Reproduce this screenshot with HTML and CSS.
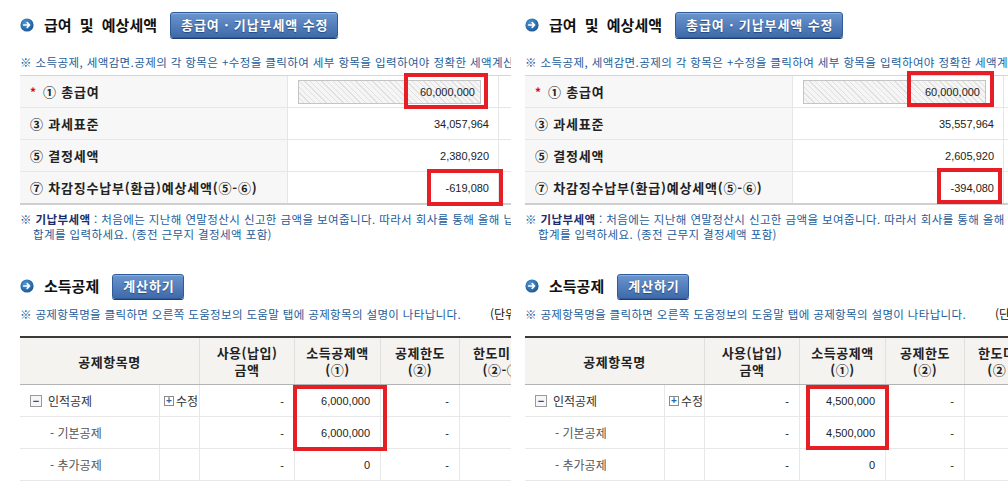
FILE: index.html
```html
<!DOCTYPE html>
<html lang="ko">
<head>
<meta charset="utf-8">
<title>급여 및 예상세액</title>
<link rel="stylesheet" href="styles.css">
</head>
<body>
<div class="page">

  <section class="panel panel-a">
    <div class="sheet">
      <div class="sec-head">
        <svg class="sec-icon" width="14" height="14" viewBox="0 0 14 14"><defs><radialGradient id="ga" cx="0.4" cy="0.35" r="0.7"><stop offset="0" stop-color="#4f97d6"/><stop offset="1" stop-color="#1a5592"/></radialGradient></defs><circle cx="7" cy="7" r="6.6" fill="url(#ga)"/><path d="M3.6 7h6 M7.2 4.6l2.4 2.4-2.4 2.4" stroke="#fff" stroke-width="1.6" fill="none" stroke-linecap="round" stroke-linejoin="round"/></svg>
        <h2 class="sec-title">급여 및 예상세액</h2>
        <button class="btn">총급여 · 기납부세액 수정</button>
      </div>
      <p class="notice">※ 소득공제, 세액감면.공제의 각 항목은 +수정을 클릭하여 세부 항목을 입력하여야 정확한 세액계산</p>
      <div class="sum-table">
        <div class="srow">
          <div class="slabel"><span class="req">*</span>① 총급여</div>
          <div class="sval"><div class="hatch">60,000,000</div></div>
          <div class="sext"></div>
        </div>
        <div class="srow">
          <div class="slabel">③ 과세표준</div>
          <div class="sval">34,057,964</div>
          <div class="sext"></div>
        </div>
        <div class="srow">
          <div class="slabel">⑤ 결정세액</div>
          <div class="sval">2,380,920</div>
          <div class="sext"></div>
        </div>
        <div class="srow last">
          <div class="slabel">⑦ 차감징수납부(환급)예상세액(⑤-⑥)</div>
          <div class="sval">-619,080</div>
          <div class="sext"></div>
        </div>
      </div>
      <div class="foot">
        <p class="foot-line">※ <b>기납부세액</b> : 처음에는 지난해 연말정산시 신고한 금액을 보여줍니다. 따라서 회사를 통해 올해 납</p>
        <p class="foot-line indent">합계를 입력하세요. (종전 근무지 결정세액 포함)</p>
      </div>

      <div class="sec-head sec2">
        <svg class="sec-icon" width="14" height="14" viewBox="0 0 14 14"><defs><radialGradient id="gb" cx="0.4" cy="0.35" r="0.7"><stop offset="0" stop-color="#4f97d6"/><stop offset="1" stop-color="#1a5592"/></radialGradient></defs><circle cx="7" cy="7" r="6.6" fill="url(#gb)"/><path d="M3.6 7h6 M7.2 4.6l2.4 2.4-2.4 2.4" stroke="#fff" stroke-width="1.6" fill="none" stroke-linecap="round" stroke-linejoin="round"/></svg>
        <h2 class="sec-title">소득공제</h2>
        <button class="btn btn-sm">계산하기</button>
      </div>
      <div class="notice2">
        <span class="notice2-text">※ 공제항목명을 클릭하면 오른쪽 도움정보의 도움말 탭에 공제항목의 설명이 나타납니다.</span>
        <span class="unit">(단위</span>
      </div>
      <div class="ded-table">
        <div class="dhead">
          <div class="dh dh-name">공제항목명</div>
          <div class="dh">사용(납입)<br>금액</div>
          <div class="dh">소득공제액<br>(①)</div>
          <div class="dh">공제한도<br>(②)</div>
          <div class="dh dh-cut">한도미달액<br>(②-①)</div>
        </div>
        <div class="drow">
          <div class="dc dname"><span class="tog">&minus;</span>인적공제</div>
          <div class="dc dedit"><span class="plus">+</span>수정</div>
          <div class="dc num">-</div>
          <div class="dc num">6,000,000</div>
          <div class="dc num">-</div>
          <div class="dc"></div>
        </div>
        <div class="drow">
          <div class="dc dname sub">- 기본공제</div>
          <div class="dc dedit"></div>
          <div class="dc num">-</div>
          <div class="dc num">6,000,000</div>
          <div class="dc num">-</div>
          <div class="dc"></div>
        </div>
        <div class="drow">
          <div class="dc dname sub">- 추가공제</div>
          <div class="dc dedit"></div>
          <div class="dc num">-</div>
          <div class="dc num">0</div>
          <div class="dc num">-</div>
          <div class="dc"></div>
        </div>
      </div>

      <div class="hl hl-1"></div>
      <div class="hl hl-2"></div>
      <div class="hl hl-3"></div>
    </div>
  </section>

  <section class="panel panel-b">
    <div class="sheet">
      <div class="sec-head">
        <svg class="sec-icon" width="14" height="14" viewBox="0 0 14 14"><defs><radialGradient id="gc" cx="0.4" cy="0.35" r="0.7"><stop offset="0" stop-color="#4f97d6"/><stop offset="1" stop-color="#1a5592"/></radialGradient></defs><circle cx="7" cy="7" r="6.6" fill="url(#gc)"/><path d="M3.6 7h6 M7.2 4.6l2.4 2.4-2.4 2.4" stroke="#fff" stroke-width="1.6" fill="none" stroke-linecap="round" stroke-linejoin="round"/></svg>
        <h2 class="sec-title">급여 및 예상세액</h2>
        <button class="btn">총급여 · 기납부세액 수정</button>
      </div>
      <p class="notice">※ 소득공제, 세액감면.공제의 각 항목은 +수정을 클릭하여 세부 항목을 입력하여야 정확한 세액계산</p>
      <div class="sum-table">
        <div class="srow">
          <div class="slabel"><span class="req">*</span>① 총급여</div>
          <div class="sval"><div class="hatch">60,000,000</div></div>
          <div class="sext"></div>
        </div>
        <div class="srow">
          <div class="slabel">③ 과세표준</div>
          <div class="sval">35,557,964</div>
          <div class="sext"></div>
        </div>
        <div class="srow">
          <div class="slabel">⑤ 결정세액</div>
          <div class="sval">2,605,920</div>
          <div class="sext"></div>
        </div>
        <div class="srow last">
          <div class="slabel">⑦ 차감징수납부(환급)예상세액(⑤-⑥)</div>
          <div class="sval">-394,080</div>
          <div class="sext"></div>
        </div>
      </div>
      <div class="foot">
        <p class="foot-line">※ <b>기납부세액</b> : 처음에는 지난해 연말정산시 신고한 금액을 보여줍니다. 따라서 회사를 통해 올해</p>
        <p class="foot-line indent">합계를 입력하세요. (종전 근무지 결정세액 포함)</p>
      </div>

      <div class="sec-head sec2">
        <svg class="sec-icon" width="14" height="14" viewBox="0 0 14 14"><defs><radialGradient id="gd" cx="0.4" cy="0.35" r="0.7"><stop offset="0" stop-color="#4f97d6"/><stop offset="1" stop-color="#1a5592"/></radialGradient></defs><circle cx="7" cy="7" r="6.6" fill="url(#gd)"/><path d="M3.6 7h6 M7.2 4.6l2.4 2.4-2.4 2.4" stroke="#fff" stroke-width="1.6" fill="none" stroke-linecap="round" stroke-linejoin="round"/></svg>
        <h2 class="sec-title">소득공제</h2>
        <button class="btn btn-sm">계산하기</button>
      </div>
      <div class="notice2">
        <span class="notice2-text">※ 공제항목명을 클릭하면 오른쪽 도움정보의 도움말 탭에 공제항목의 설명이 나타납니다.</span>
        <span class="unit">(단</span>
      </div>
      <div class="ded-table">
        <div class="dhead">
          <div class="dh dh-name">공제항목명</div>
          <div class="dh">사용(납입)<br>금액</div>
          <div class="dh">소득공제액<br>(①)</div>
          <div class="dh">공제한도<br>(②)</div>
          <div class="dh dh-cut">한도미<br>(②</div>
        </div>
        <div class="drow">
          <div class="dc dname"><span class="tog">&minus;</span>인적공제</div>
          <div class="dc dedit"><span class="plus">+</span>수정</div>
          <div class="dc num">-</div>
          <div class="dc num">4,500,000</div>
          <div class="dc num">-</div>
          <div class="dc"></div>
        </div>
        <div class="drow">
          <div class="dc dname sub">- 기본공제</div>
          <div class="dc dedit"></div>
          <div class="dc num">-</div>
          <div class="dc num">4,500,000</div>
          <div class="dc num">-</div>
          <div class="dc"></div>
        </div>
        <div class="drow">
          <div class="dc dname sub">- 추가공제</div>
          <div class="dc dedit"></div>
          <div class="dc num">-</div>
          <div class="dc num">0</div>
          <div class="dc num">-</div>
          <div class="dc"></div>
        </div>
      </div>

      <div class="hl hl-1"></div>
      <div class="hl hl-2"></div>
      <div class="hl hl-3"></div>
    </div>
  </section>

</div>
</body>
</html>
```

FILE: styles.css
```css
* { box-sizing: border-box; }
html, body { margin: 0; padding: 0; background: #fff; }
body {
  font-family: "Liberation Sans", "Noto Sans CJK KR", sans-serif;
  color: #333;
  width: 1008px;
  height: 484px;
  overflow: hidden;
}
.page { display: flex; width: 1008px; height: 484px; }
.panel { overflow: hidden; height: 484px; }
.panel-a { width: 511px; padding-left: 20px; }
.panel-b { width: 497px; padding-left: 14px; }
.sheet { position: relative; padding-top: 12px; overflow: hidden; height: 484px; }
.panel-a .sheet { width: 491px; }
.panel-b .sheet { width: 483px; }

/* section header */
.sec-head {
  display: flex;
  align-items: center;
  height: 26px;
}
.sec-icon { flex: 0 0 14px; display: block; }
.sec-title {
  margin: 0 0 0 10px;
  font-family: "Noto Sans CJK KR", sans-serif;
  font-size: 15px;
  font-weight: 700;
  color: #111;
  word-spacing: 4px;
  line-height: 26px;
  white-space: nowrap;
}
.btn {
  margin-left: 13px;
  height: 26px;
  padding: 0 9px 0 10px;
  border: 1px solid #2f5b98;
  border-radius: 3px;
  background: linear-gradient(#6b95cd, #3f6aab);
  box-shadow: inset 0 1px 0 rgba(255,255,255,0.25), 0 1px 0 #1f3f6e;
  color: #fff;
  font-family: "Noto Sans CJK KR", sans-serif;
  font-size: 13px;
  font-weight: 700;
  letter-spacing: 0.9px;
  line-height: 22px;
  text-shadow: 0 1px 1px #27497c;
  white-space: nowrap;
}
.btn-sm { padding: 0 8px 0 10px; height: 25px; margin-left: 13px; }

/* notices */
.notice {
  margin: 16px 0 0;
  font-family: "Noto Sans CJK KR", sans-serif;
  font-size: 11.5px;
  letter-spacing: 0.4px;
  line-height: 16px;
  color: #1d5c9b;
  white-space: nowrap;
  overflow: hidden;
}

/* summary table */
.sum-table { margin-top: 5px; border-top: 1px solid #d6d6d6; }
.srow {
  display: grid;
  grid-template-columns: 268px 211px 140px;
  height: 32px;
  border-bottom: 1px solid #e6e6e6;
}
.srow.last { height: 33px; border-bottom: 2px solid #cfcfcf; }
.slabel {
  background: #f7f7f7;
  border-right: 1px solid #e6e6e6;
  padding-left: 10px;
  font-family: "Noto Sans CJK KR", sans-serif;
  font-size: 13px;
  font-weight: 700;
  letter-spacing: 0.8px;
  color: #222;
  display: flex;
  align-items: center;
  white-space: nowrap;
}
.req { color: #d01010; margin-right: 6px; font-size: 12px; }
.sval {
  border-right: 1px solid #e6e6e6;
  display: flex;
  align-items: center;
  justify-content: flex-end;
  padding-right: 9px;
  font-size: 11px;
  color: #222;
}
.hatch {
  width: 183px;
  height: 24px;
  margin-right: 8px;
  border: 1px solid #c4c4c4;
  background: repeating-linear-gradient(45deg, #f5f5f5 0 3px, #e0e0e0 3px 4px);
  text-align: right;
  padding-right: 5px;
  line-height: 22px;
  font-size: 11px;
  color: #222;
}

/* footnote */
.foot { margin-top: 7px; }
.foot-line {
  margin: 0;
  font-family: "Noto Sans CJK KR", sans-serif;
  font-size: 11.5px;
  letter-spacing: 0.4px;
  line-height: 15px;
  color: #1d5c9b;
  white-space: nowrap;
  overflow: hidden;
}
.foot-line b { color: #1a2d6a; font-weight: 700; }
.indent { padding-left: 13px; }

.sec2 { margin-top: 31px; }

.notice2 {
  display: flex;
  align-items: center;
  margin-top: 7px;
  height: 16px;
  white-space: nowrap;
  overflow: hidden;
}
.notice2-text {
  flex: 0 0 470px;
  font-family: "Noto Sans CJK KR", sans-serif;
  font-size: 11.5px;
  letter-spacing: 0.35px;
  line-height: 16px;
  color: #1d5c9b;
}
.unit {
  font-family: "Noto Sans CJK KR", sans-serif;
  font-size: 12px;
  color: #111;
  line-height: 16px;
}

/* deduction table */
.ded-table { margin-top: 14px; }
.dhead {
  display: grid;
  grid-template-columns: 180px 95px 86px 79px 94px;
  height: 49px;
  border-top: 2px solid #3a3a3a;
  border-bottom: 1px solid #b3b3b3;
  background: #f4f3f0;
}
.dh {
  display: flex;
  align-items: center;
  justify-content: center;
  text-align: center;
  border-right: 1px solid #e2e0dc;
  font-family: "Noto Sans CJK KR", sans-serif;
  font-size: 13px;
  font-weight: 700;
  letter-spacing: 0.5px;
  line-height: 17px;
  color: #222;
  white-space: nowrap;
}
.dh.dh-cut { justify-content: flex-start; padding-left: 13px; text-align: center; }
.drow {
  display: grid;
  grid-template-columns: 140px 40px 95px 86px 79px 94px;
  height: 32px;
  border-bottom: 1px solid #e8e8e8;
}
.dc {
  display: flex;
  align-items: center;
  border-right: 1px solid #e8e8e8;
  font-family: "Noto Sans CJK KR", sans-serif;
  font-size: 12px;
  color: #333;
  white-space: nowrap;
}
.dname { padding-left: 10px; }
.dname.sub { padding-left: 30px; color: #555; }
.tog {
  display: inline-flex;
  align-items: center;
  justify-content: center;
  width: 12px;
  height: 12px;
  margin-right: 6px;
  border: 1px solid #9a9a9a;
  background: #f6f6f6;
  color: #2a4f8a;
  font-size: 11px;
  font-weight: 700;
  line-height: 10px;
  font-family: "Liberation Sans", sans-serif;
}
.dedit { padding-left: 4px; }
.plus {
  display: inline-flex;
  align-items: center;
  justify-content: center;
  width: 10px;
  height: 10px;
  margin-right: 2px;
  border: 1px solid #8a8a8a;
  color: #2a64b0;
  font-family: "Liberation Sans", sans-serif;
  font-size: 10px;
  font-weight: 700;
  line-height: 8px;
}
.num {
  justify-content: flex-end;
  padding-right: 10px;
  font-family: "Liberation Sans", "Noto Sans CJK KR", sans-serif;
  font-size: 11px;
  color: #222;
}

/* red highlight boxes (overlay annotations) */
.hl {
  position: absolute;
  border: 4px solid #e61f26;
  pointer-events: none;
}
.panel-a .hl-1 { left: 384px; top: 73px; width: 84px; height: 36px; }
.panel-a .hl-2 { left: 407px; top: 169px; width: 76px; height: 37px; }
.panel-a .hl-3 { left: 273px; top: 385px; width: 94px; height: 66px; }
.panel-b .hl-1 { left: 382px; top: 71px; width: 87px; height: 36px; }
.panel-b .hl-2 { left: 412px; top: 168px; width: 65px; height: 36px; }
.panel-b .hl-3 { left: 281px; top: 385px; width: 83px; height: 65px; }
```
